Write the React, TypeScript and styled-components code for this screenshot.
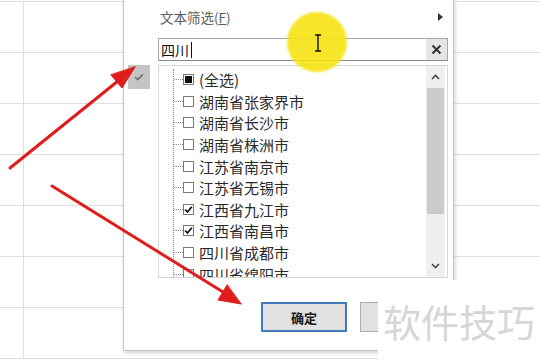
import React from "react";
import styled, { createGlobalStyle } from "styled-components";

const Global = createGlobalStyle`
  html, body { margin: 0; padding: 0; background: #fff; }
  body { width: 540px; height: 360px; overflow: hidden; font-family: "Noto Sans CJK SC", "Noto Sans", sans-serif; }
`;

const Stage = styled.div`
  position: relative;
  width: 540px;
  height: 360px;
  overflow: hidden;
  background: #fff;
`;

const Sheet = styled.div`
  display: grid;
  grid-template-columns: 24px 1fr;
  grid-auto-rows: 51px;
  margin-top: 1px;
  border-top: 1px solid #dedede;
`;

const Cell = styled.div<{ $first?: boolean }>`
  border-bottom: 1px solid #dedede;
  border-right: ${(p) => (p.$first ? "1px solid #dedede" : "none")};
`;

const Panel = styled.div`
  position: absolute;
  left: 123px;
  top: -2px;
  width: 331px;
  height: 353px;
  box-sizing: border-box;
  background: #fff;
  border: 1px solid #c4c4c4;
  box-shadow: 1px 2px 4px rgba(0, 0, 0, 0.18);
  display: flex;
  flex-direction: column;
`;

const MenuItem = styled.div`
  height: 36px;
  display: flex;
  align-items: center;
  justify-content: space-between;
  padding: 0 10px 0 36px;
  font-size: 13.5px;
  color: #5c5c5c;
  u { text-decoration: underline; }
`;

const SubArrow = styled.span`
  width: 0;
  height: 0;
  border-top: 4px solid transparent;
  border-bottom: 4px solid transparent;
  border-left: 5px solid #333;
`;

const SearchBox = styled.div`
  margin: 3px 0 0 34px;
  width: 290px;
  height: 23px;
  box-sizing: border-box;
  border: 1px solid #a8a8a8;
  border-bottom-color: #8a8a8a;
  display: flex;
  align-items: center;
`;

const SearchText = styled.div`
  flex: 1;
  padding-left: 2px;
  font-size: 14px;
  color: #111;
  display: flex;
  align-items: center;
`;

const Caret = styled.span`
  display: inline-block;
  width: 1px;
  height: 16px;
  background: #111;
  margin-left: 2px;
`;

const ClearBtn = styled.div`
  width: 21px;
  height: 21px;
  background: #e6e6e6;
  display: flex;
  align-items: center;
  justify-content: center;
`;

const ListArea = styled.div`
  display: flex;
  margin-top: 4px;
`;

const Gutter = styled.div`
  width: 34px;
  padding-left: 4px;
  box-sizing: border-box;
`;

const CheckTile = styled.div`
  width: 22px;
  height: 24px;
  background: #c5c5c5;
  display: flex;
  align-items: center;
  justify-content: center;
`;

const ListBox = styled.div`
  width: 290px;
  height: 213px;
  box-sizing: border-box;
  border: 1px solid #d6d6d6;
  display: flex;
  overflow: hidden;
`;

const Items = styled.div`
  flex: 1;
  padding: 3px 0 0 14px;
  overflow: hidden;
`;

const Tree = styled.div`
  border-left: 1px dotted #8c8c8c;
`;

const Row = styled.div`
  height: 21.6px;
  display: flex;
  align-items: center;
  font-size: 15px;
  color: #2a2a2a;
  white-space: nowrap;
`;

const Dash = styled.span`
  width: 9px;
  border-top: 1px dotted #8c8c8c;
`;

const Box = styled.span`
  width: 11px;
  height: 11px;
  box-sizing: border-box;
  border: 1px solid #7a7a7a;
  background: #fff;
  margin-right: 5px;
  display: flex;
  align-items: center;
  justify-content: center;
`;

const Partial = styled.span`
  width: 7px;
  height: 7px;
  background: #111;
`;

const Scrollbar = styled.div`
  width: 19px;
  margin-right: 2px;
  background: #efefef;
  display: flex;
  flex-direction: column;
  align-items: center;
`;

const ScrollBtn = styled.div`
  height: 22px;
  width: 100%;
  display: flex;
  align-items: center;
  justify-content: center;
`;

const Thumb = styled.div`
  width: 17px;
  height: 126px;
  background: #cbcbcb;
`;

const Spacer = styled.div`
  flex: 1;
`;

const ButtonRow = styled.div`
  display: flex;
  gap: 13px;
  margin: 24px 0 0 137px;
`;

const Button = styled.div<{ $primary?: boolean }>`
  width: 86px;
  height: 30px;
  box-sizing: border-box;
  background: #e1e1e1;
  border: ${(p) => (p.$primary ? "2px solid #3f7db8" : "1px solid #adadad")};
  display: flex;
  align-items: center;
  justify-content: center;
  font-size: 13px;
  font-weight: 600;
  color: #1a1a1a;
`;

const Highlight = styled.div`
  position: absolute;
  left: 287px;
  top: 12px;
  width: 60px;
  height: 60px;
  border-radius: 50%;
  background: rgba(246, 226, 18, 0.9);
  filter: blur(1px);
`;

const Overlay = styled.svg`
  position: absolute;
  left: 0;
  top: 0;
  pointer-events: none;
`;

const Watermark = styled.div`
  position: absolute;
  left: 378px;
  top: 280px;
  width: 162px;
  height: 80px;
  background: #fff;
  display: flex;
  align-items: center;
  padding-left: 5px;
  box-sizing: border-box;
  font-size: 38px;
  color: #d6d6d6;
`;

type Item = { label: string; state: "none" | "checked" | "partial" };

const items: Item[] = [
  { label: "(全选)", state: "partial" },
  { label: "湖南省张家界市", state: "none" },
  { label: "湖南省长沙市", state: "none" },
  { label: "湖南省株洲市", state: "none" },
  { label: "江苏省南京市", state: "none" },
  { label: "江苏省无锡市", state: "none" },
  { label: "江西省九江市", state: "checked" },
  { label: "江西省南昌市", state: "checked" },
  { label: "四川省成都市", state: "none" },
  { label: "四川省绵阳市", state: "none" },
];

const Tick = () => (
  <svg width="9" height="9" viewBox="0 0 9 9">
    <polyline points="1.2,4.6 3.5,7 7.8,1.8" fill="none" stroke="#111" strokeWidth="1.8" />
  </svg>
);

export default function App() {
  return (
    <Stage>
      <Global />
      <Sheet>
        {Array.from({ length: 7 }).map((_, i) => (
          <React.Fragment key={i}>
            <Cell $first />
            <Cell />
          </React.Fragment>
        ))}
      </Sheet>

      <Panel>
        <MenuItem>
          <span>
            文本筛选(<u>F</u>)
          </span>
          <SubArrow />
        </MenuItem>
        <SearchBox>
          <SearchText>
            四川
            <Caret />
          </SearchText>
          <ClearBtn>
            <svg width="11" height="11" viewBox="0 0 11 11">
              <path d="M1.5 1.5 L9.5 9.5 M9.5 1.5 L1.5 9.5" stroke="#333" strokeWidth="2" />
            </svg>
          </ClearBtn>
        </SearchBox>
        <ListArea>
          <Gutter>
            <CheckTile>
              <svg width="10" height="8" viewBox="0 0 10 8">
                <polyline points="1,4 3.8,6.6 9,1.2" fill="none" stroke="#6c6c6c" strokeWidth="1.6" />
              </svg>
            </CheckTile>
          </Gutter>
          <ListBox>
            <Items>
              <Tree>
                {items.map((it) => (
                  <Row key={it.label}>
                    <Dash />
                    <Box>
                      {it.state === "partial" && <Partial />}
                      {it.state === "checked" && <Tick />}
                    </Box>
                    {it.label}
                  </Row>
                ))}
              </Tree>
            </Items>
            <Scrollbar>
              <ScrollBtn>
                <svg width="9" height="6" viewBox="0 0 9 6">
                  <polyline points="1,5 4.5,1.5 8,5" fill="none" stroke="#444" strokeWidth="1.6" />
                </svg>
              </ScrollBtn>
              <Thumb />
              <Spacer />
              <ScrollBtn>
                <svg width="9" height="6" viewBox="0 0 9 6">
                  <polyline points="1,1 4.5,4.5 8,1" fill="none" stroke="#444" strokeWidth="1.6" />
                </svg>
              </ScrollBtn>
            </Scrollbar>
          </ListBox>
        </ListArea>
        <ButtonRow>
          <Button $primary>确定</Button>
          <Button aria-label="取消" />
        </ButtonRow>
      </Panel>

      <Highlight />

      <Overlay width="540" height="360" viewBox="0 0 540 360">
        <path
          d="M315 35 L321 35 M318 35 L318 51 M315 51 L321 51"
          stroke="#111"
          strokeWidth="1.4"
          fill="none"
        />
        <g fill="#e01d1d" stroke="#e01d1d" strokeLinecap="round" strokeLinejoin="round">
          <line x1="10" y1="168" x2="118" y2="81" strokeWidth="3" />
          <polygon points="135,67 122,88 111,75" strokeWidth="1" />
          <line x1="52" y1="186" x2="223" y2="292" strokeWidth="3" />
          <polygon points="241,304 218,300 227,285" strokeWidth="1" />
        </g>
      </Overlay>

      <Watermark>软件技巧</Watermark>
    </Stage>
  );
}
